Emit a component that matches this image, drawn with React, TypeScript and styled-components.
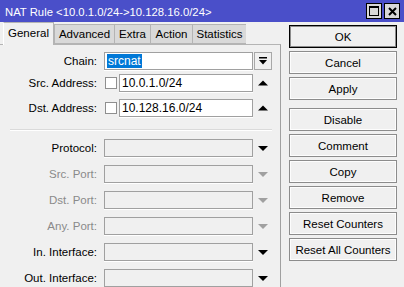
import styled, { createGlobalStyle } from 'styled-components'

const Global = createGlobalStyle`
  html, body {
    margin: 0;
    padding: 0;
    background: #f0f0f0;
  }
  body {
    font-family: 'Liberation Sans', Arial, sans-serif;
    font-size: 11px;
    color: #000;
  }
`

const Window = styled.div`
  width: 404px;
  height: 287px;
  overflow: hidden;
  background: #f0f0f0;
  display: flex;
  flex-direction: column;
`

const TitleBar = styled.div`
  height: 22px;
  flex: none;
  background: #4a4fc9;
  color: #fff;
  display: flex;
  align-items: center;
  padding: 0 4px 0 5px;
  font-size: 11.3px;
`

const TitleText = styled.span`
  flex: 1;
  padding-top: 1px;
`

const TitleButton = styled.div`
  width: 14px;
  height: 14px;
  margin-left: 2px;
  background: #d8d8d8;
  border: 1px solid #000;
  display: flex;
  align-items: center;
  justify-content: center;
`

const Body = styled.div`
  flex: 1;
  display: flex;
`

const LeftPane = styled.div`
  width: 281px;
  display: flex;
  flex-direction: column;
`

const TabStrip = styled.div`
  height: 22px;
  display: flex;
  align-items: flex-end;
  padding-left: 3px;
  position: relative;
  z-index: 1;
`

const Tab = styled.div<{ $active?: boolean; $w: number }>`
  width: ${p => p.$w}px;
  box-sizing: border-box;
  height: ${p => (p.$active ? 23 : 20)}px;
  margin-bottom: ${p => (p.$active ? -1 : 0)}px;
  background: ${p => (p.$active ? '#f0f0f0' : '#d9d9d9')};
  border: 1px solid #b4b4b4;
  border-bottom: ${p => (p.$active ? 'none' : '1px solid #b4b4b4')};
  border-left-color: ${p => (p.$active ? '#ffffff' : '#b4b4b4')};
  border-right: ${p => (p.$active ? '1px solid #b4b4b4' : 'none')};
  display: flex;
  align-items: center;
  justify-content: center;
  font-size: 11.5px;
  padding-bottom: ${p => (p.$active ? 2 : 0)}px;
`

const Panel = styled.div`
  flex: 1;
  border-top: 1px solid #b4b4b4;
  border-right: 1px solid #a0a0a0;
  padding-top: 7px;
  display: flex;
  flex-direction: column;
`

const Group = styled.div<{ $gap: number }>`
  display: flex;
  flex-direction: column;
  gap: ${p => p.$gap}px;
`

const Row = styled.div<{ $after?: number }>`
  display: grid;
  grid-template-columns: 104px 149px 19px;
  height: 18px;
  align-items: center;
  margin-bottom: ${p => p.$after ?? 0}px;
`

const Label = styled.div<{ $disabled?: boolean }>`
  text-align: right;
  padding-right: 7px;
  font-size: 11.5px;
  color: ${p => (p.$disabled ? '#8a8a8a' : '#000')};
  white-space: nowrap;
`

const Field = styled.div`
  display: flex;
  align-items: center;
  gap: 2px;
  height: 18px;
`

const Input = styled.div<{ $disabled?: boolean }>`
  flex: 1;
  height: 18px;
  box-sizing: border-box;
  background: ${p => (p.$disabled ? '#f0f0f0' : '#fff')};
  border: 1px solid #a0a0a0;
  box-shadow: 0 1px 0 #fff;
  display: flex;
  align-items: center;
  padding-left: 2px;
  font-size: 12px;
`

const Selected = styled.span`
  background: #0078d7;
  color: #fff;
  padding: 0 1px;
  line-height: 14px;
`

const Check = styled.div`
  width: 12px;
  height: 12px;
  margin-left: 1px;
  box-sizing: border-box;
  border: 1px solid #8f8f8f;
  background: #fff;
  flex: none;
`

const DropButton = styled.div`
  width: 18px;
  height: 18px;
  margin-left: 1px;
  box-sizing: border-box;
  border: 1px solid #a8a8a8;
  background: #f0f0f0;
  display: flex;
  align-items: center;
  justify-content: center;
`

const Arrow = styled.div`
  display: flex;
  align-items: center;
  padding-left: 5px;
`

const Separator = styled.div`
  height: 1px;
  background: #dadada;
  border-bottom: 1px solid #fff;
  margin: 12px 8px 8px 10px;
`

const ButtonColumn = styled.div`
  width: 108px;
  margin-left: 8px;
  padding-top: 3px;
  display: flex;
  flex-direction: column;
  gap: 3px;
`

const Button = styled.div<{ $default?: boolean; $spaced?: boolean }>`
  height: 23px;
  box-sizing: border-box;
  border: 1px solid ${p => (p.$default ? '#000' : '#8c8c8c')};
  box-shadow: inset 0 0 0 1px ${p => (p.$default ? '#8c8c8c' : '#fdfdfd')};
  background: #f0f0f0;
  display: flex;
  align-items: center;
  justify-content: center;
  font-size: 11.5px;
  margin-top: ${p => (p.$spaced ? 5 : 0)}px;
`

function Triangle({ up, color }: { up?: boolean; color: string }) {
  return (
    <svg width="10" height="7" viewBox="0 0 10 7">
      <polygon points={up ? '5,0.5 10,5.5 0,5.5' : '0,1 10,1 5,6'} fill={color} />
    </svg>
  )
}

function DropIcon() {
  return (
    <svg width="10" height="10" viewBox="0 0 10 10">
      <rect x="1" y="1" width="8" height="1.5" fill="#000" />
      <polygon points="1,4 9,4 5,8.5" fill="#000" />
    </svg>
  )
}

const lower = [
  { label: 'Protocol:', disabled: false },
  { label: 'Src. Port:', disabled: true },
  { label: 'Dst. Port:', disabled: true },
  { label: 'Any. Port:', disabled: true },
  { label: 'In. Interface:', disabled: false },
  { label: 'Out. Interface:', disabled: false },
]

const tabs = [
  { name: 'General', w: 51 },
  { name: 'Advanced', w: 60 },
  { name: 'Extra', w: 36 },
  { name: 'Action', w: 42 },
  { name: 'Statistics', w: 54 },
]

const buttons = ['OK', 'Cancel', 'Apply', 'Disable', 'Comment', 'Copy', 'Remove', 'Reset Counters', 'Reset All Counters']

export default function App() {
  return (
    <>
      <Global />
      <Window>
        <TitleBar>
          <TitleText>NAT Rule &lt;10.0.1.0/24-&gt;10.128.16.0/24&gt;</TitleText>
          <TitleButton>
            <svg width="10" height="10" viewBox="0 0 10 10">
              <rect x="0.5" y="0.5" width="9" height="9" fill="none" stroke="#000" />
              <rect x="0.5" y="0.5" width="9" height="1.5" fill="#000" />
            </svg>
          </TitleButton>
          <TitleButton>
            <svg width="9" height="9" viewBox="0 0 9 9">
              <path d="M1 1 L8 8 M8 1 L1 8" stroke="#000" strokeWidth="2" />
            </svg>
          </TitleButton>
        </TitleBar>
        <Body>
          <LeftPane>
            <TabStrip>
              {tabs.map((t, i) => (
                <Tab key={t.name} $active={i === 0} $w={t.w}>
                  {t.name}
                </Tab>
              ))}
            </TabStrip>
            <Panel>
              <Row $after={4}>
                <Label>Chain:</Label>
                <Field>
                  <Input>
                    <Selected>srcnat</Selected>
                  </Input>
                </Field>
                <DropButton>
                  <DropIcon />
                </DropButton>
              </Row>
              <Row $after={7}>
                <Label>Src. Address:</Label>
                <Field>
                  <Check />
                  <Input>10.0.1.0/24</Input>
                </Field>
                <Arrow>
                  <Triangle up color="#000" />
                </Arrow>
              </Row>
              <Row>
                <Label>Dst. Address:</Label>
                <Field>
                  <Check />
                  <Input>10.128.16.0/24</Input>
                </Field>
                <Arrow>
                  <Triangle up color="#000" />
                </Arrow>
              </Row>
              <Separator />
              <Group $gap={8}>
                {lower.map(r => (
                  <Row key={r.label}>
                    <Label $disabled={r.disabled}>{r.label}</Label>
                    <Field>
                      <Input $disabled />
                    </Field>
                    <Arrow>
                      <Triangle color={r.disabled ? '#a0a0a0' : '#000'} />
                    </Arrow>
                  </Row>
                ))}
              </Group>
            </Panel>
          </LeftPane>
          <ButtonColumn>
            {buttons.map((b, i) => (
              <Button key={b} $default={i === 0} $spaced={b === 'Disable'}>
                {b}
              </Button>
            ))}
          </ButtonColumn>
        </Body>
      </Window>
    </>
  )
}
